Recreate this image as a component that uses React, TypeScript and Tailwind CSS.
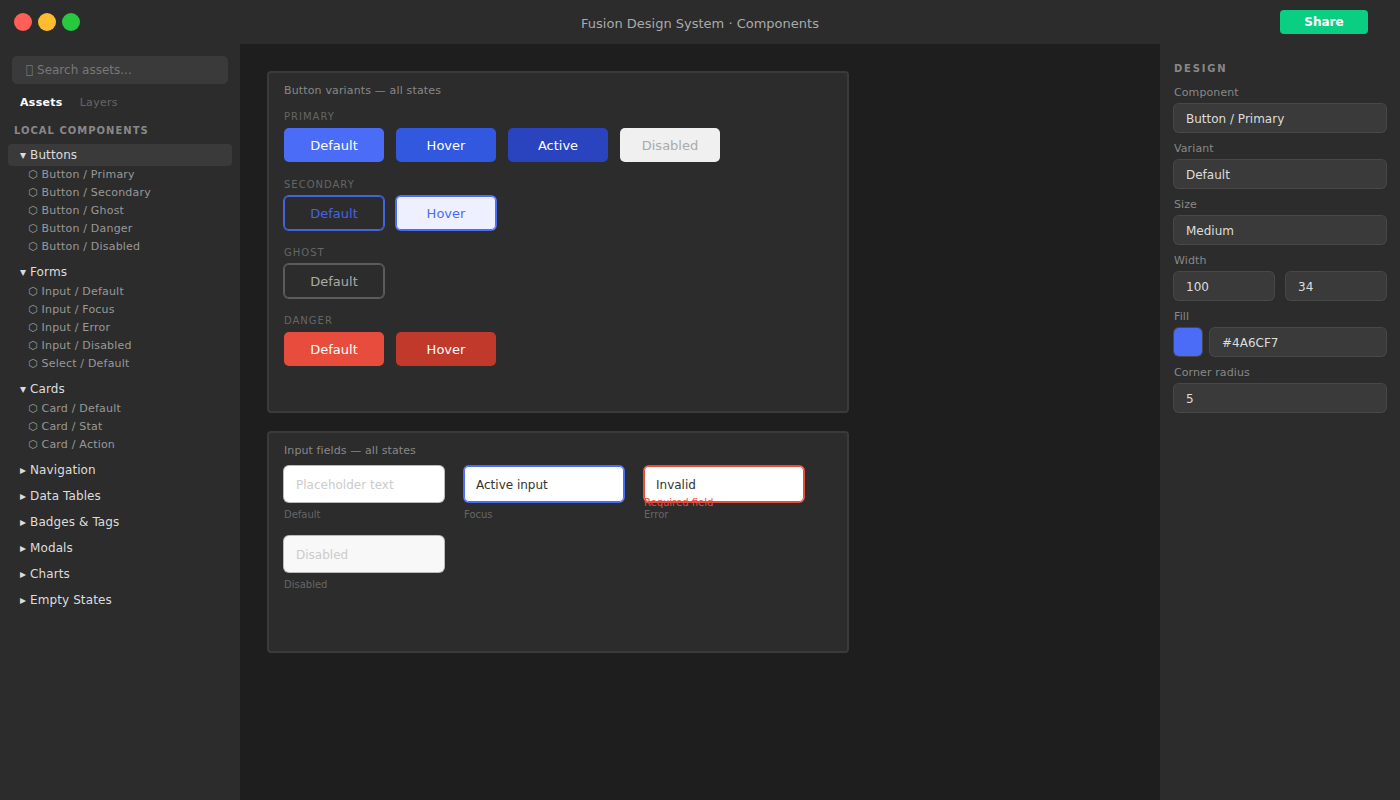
import React from "react";

const tree: { name: string; open?: boolean; active?: boolean; items?: string[] }[] = [
  { name: "Buttons", open: true, active: true, items: ["Button / Primary", "Button / Secondary", "Button / Ghost", "Button / Danger", "Button / Disabled"] },
  { name: "Forms", open: true, items: ["Input / Default", "Input / Focus", "Input / Error", "Input / Disabled", "Select / Default"] },
  { name: "Cards", open: true, items: ["Card / Default", "Card / Stat", "Card / Action"] },
  { name: "Navigation" },
  { name: "Data Tables" },
  { name: "Badges & Tags" },
  { name: "Modals" },
  { name: "Charts" },
  { name: "Empty States" },
];

const btn = "w-[100px] h-[34px] pt-[2px] rounded-[5px] flex items-center justify-center text-[13px]";
const label = "text-[10px] tracking-[1px] text-[#666] leading-3 mb-[5px]";
const field = "h-[28px] pt-[2px] rounded-[5px] shadow-[0_0_0_1px_#484848] bg-[#3a3a3a] px-3 flex items-center text-xs text-[#ddd]";
const plabel = "text-[11px] leading-[13px] tracking-[0.1px] text-[#888] mb-[5px]";
const input = "w-[160px] h-[36px] pt-[2px] rounded-[5px] px-3 flex items-center text-xs";
const caption = "text-[10px] leading-3 text-[#666] mt-[7px]";

function Field({ title, value }: { title: string; value: string }) {
  return (
    <div className="mb-[10px]">
      <div className={plabel}>{title}</div>
      <div className={field}>{value}</div>
    </div>
  );
}

export default function App() {
  return (
    <div className="w-[1400px] h-[800px] overflow-hidden flex flex-col bg-[#1e1e1e] font-['DejaVu_Sans',sans-serif]">
      <header className="h-[44px] shrink-0 bg-[#2c2c2c] relative flex items-center justify-between pl-[14px] pr-8">
        <div className="flex gap-[6px]">
          <span className="w-[18px] h-[18px] rounded-full bg-[#ff5f57]" />
          <span className="w-[18px] h-[18px] rounded-full bg-[#febc2e]" />
          <span className="w-[18px] h-[18px] rounded-full bg-[#28c840]" />
        </div>
        <div className="absolute left-0 right-0 top-[16px] text-center text-[13px] leading-4 text-[#aaa]">Fusion Design System · Components</div>
        <div className="w-[88px] h-[24px] rounded-[4px] bg-[#0acf83] flex items-center justify-center text-xs font-bold text-white">Share</div>
      </header>
      <div className="flex flex-1 min-h-0">
        <aside className="w-[240px] shrink-0 bg-[#2c2c2c] flex flex-col">
          <div className="mx-3 mt-3 h-[28px] rounded-[5px] bg-[#3a3a3a] px-[14px] flex items-center text-xs text-[#777]">{"\uE000"} Search assets...</div>
          <div className="flex gap-[17px] pl-5 mt-[12px] text-[11px] leading-[13px] tracking-[0.3px]">
            <span className="font-bold text-white">Assets</span>
            <span className="text-[#666]">Layers</span>
          </div>
          <div className="pl-[14px] mt-[16px] text-[10px] leading-3 font-bold tracking-[1px] text-[#888]">LOCAL COMPONENTS</div>
          <div className="mt-[7px] px-2 flex flex-col gap-[4px]">
            {tree.map((g) => (
              <div key={g.name}>
                <div className={`h-[22px] rounded-[4px] pl-3 flex items-center text-xs tracking-[0.1px] text-[#ddd] ${g.active ? "bg-[#3a3a3a]" : ""}`}>
                  {g.open ? "▾" : "▸"} {g.name}
                </div>
                {g.items && (
                  <div className="pb-px">
                    {g.items.map((i) => (
                      <div key={i} className="h-[18px] pl-5 flex items-center text-[11px] tracking-[0.2px] text-[#999]">⬡ {i}</div>
                    ))}
                  </div>
                )}
              </div>
            ))}
          </div>
        </aside>
        <main className="flex-1 pl-[27px] pt-[27px] flex flex-col gap-[18px] items-start">
          <section className="w-[582px] h-[342px] rounded-[4px] border-2 border-[#3a3a3a] bg-[#2c2c2c] px-[15px] pt-[11px]">
            <div className="text-[11px] leading-[13px] tracking-[0.15px] text-[#888] mb-[14px]">Button variants — all states</div>
            <div className={label}>PRIMARY</div>
            <div className="flex gap-3 mb-[17px]">
              <div className={`${btn} bg-[#4a6cf7] text-white`}>Default</div>
              <div className={`${btn} bg-[#3358e0] text-white`}>Hover</div>
              <div className={`${btn} bg-[#2a44c0] text-white`}>Active</div>
              <div className={`${btn} bg-[#f0f0f0] text-[#aaa]`}>Disabled</div>
            </div>
            <div className={label}>SECONDARY</div>
            <div className="flex gap-3 mb-[17px]">
              <div className={`${btn} shadow-[0_0_0_1px_#4464de,inset_0_0_0_1px_#4464de] text-[#4565e0]`}>Default</div>
              <div className={`${btn} shadow-[0_0_0_1px_#4a6cf7,inset_0_0_0_1px_#4a6cf7] bg-[#eef0ff] text-[#4a6cf7]`}>Hover</div>
            </div>
            <div className={label}>GHOST</div>
            <div className="flex gap-3 mb-[17px]">
              <div className={`${btn} shadow-[0_0_0_1px_#5c5c5c,inset_0_0_0_1px_#5c5c5c] text-[#aaa]`}>Default</div>
            </div>
            <div className={label}>DANGER</div>
            <div className="flex gap-3">
              <div className={`${btn} bg-[#e74c3c] text-white`}>Default</div>
              <div className={`${btn} bg-[#c0392b] text-white`}>Hover</div>
            </div>
          </section>
          <section className="w-[582px] h-[222px] rounded-[4px] border-2 border-[#3a3a3a] bg-[#2c2c2c] px-[15px] pt-[11px]">
            <div className="text-[11px] leading-[13px] tracking-[0.1px] text-[#888] mb-[9px]">Input fields — all states</div>
            <div className="flex gap-5 mb-[15px]">
              <div className="w-[160px]">
                <div className={`${input} bg-white shadow-[0_0_0_1px_#bbb] text-[#ccc]`}>Placeholder text</div>
                <div className={caption}>Default</div>
              </div>
              <div className="w-[160px]">
                <div className={`${input} bg-white shadow-[0_0_0_1px_#4a6cf7,inset_0_0_0_1px_#4a6cf7] text-[#333]`}>Active input</div>
                <div className={caption}>Focus</div>
              </div>
              <div className="w-[160px] relative">
                <div className={`${input} bg-white shadow-[0_0_0_1px_#e74c3c,inset_0_0_0_1px_#e74c3c] text-[#333]`}>Invalid</div>
                <div className="absolute left-0 top-[31px] text-[10px] leading-3 text-[#e74c3c]">Required field</div>
                <div className={caption}>Error</div>
              </div>
            </div>
            <div className="w-[160px]">
              <div className={`${input} bg-[#f8f8f8] shadow-[0_0_0_1px_#bbb] text-[#ccc]`}>Disabled</div>
              <div className={caption}>Disabled</div>
            </div>
          </section>
        </main>
        <aside className="w-[240px] shrink-0 bg-[#2c2c2c] px-[14px] pt-[19px]">
          <div className="text-[10px] leading-3 font-bold tracking-[1.8px] text-[#888] mb-[11px]">DESIGN</div>
          <Field title="Component" value="Button / Primary" />
          <Field title="Variant" value="Default" />
          <Field title="Size" value="Medium" />
          <div className="mb-[10px]">
            <div className={plabel}>Width</div>
            <div className="flex gap-3">
              <div className={`${field} flex-1`}>100</div>
              <div className={`${field} flex-1`}>34</div>
            </div>
          </div>
          <div className="mb-[10px]">
            <div className={plabel}>Fill</div>
            <div className="flex gap-2">
              <div className="w-[28px] h-[28px] rounded-[5px] bg-[#4a6cf7] shadow-[0_0_0_1px_#484848]" />
              <div className={`${field} flex-1`}>#4A6CF7</div>
            </div>
          </div>
          <Field title="Corner radius" value="5" />
        </aside>
      </div>
    </div>
  );
}
